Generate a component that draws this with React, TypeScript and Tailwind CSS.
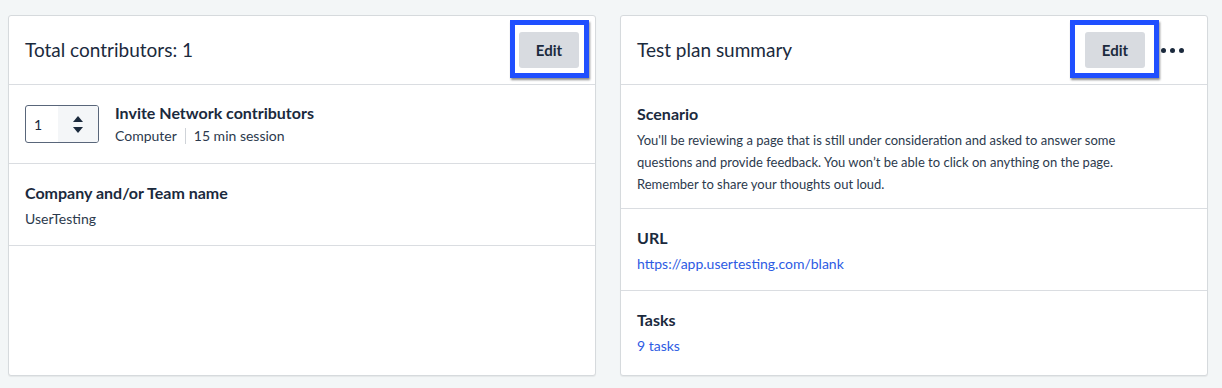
import React from 'react';

const font = { fontFamily: 'Lato, "Open Sans", sans-serif' };

function EditButton({ wide }: { wide?: boolean }) {
  return (
    <div className="relative">
      <div
        className={
          wide
            ? 'pointer-events-none absolute -top-[12px] -bottom-[10px] -left-[15px] -right-[14px] border-[5px] border-[#1f4fff] shadow-[1px_2px_2px_rgba(0,0,0,0.45)]'
            : 'pointer-events-none absolute -top-[12px] -bottom-[10px] -left-[9px] -right-[10px] border-[5px] border-[#1f4fff] shadow-[1px_2px_2px_rgba(0,0,0,0.45)]'
        }
      />
      <button className="h-9 w-[60px] rounded-[3px] bg-[#d8dbe0] text-[15px] font-bold text-[#1b2a3d]">Edit</button>
    </div>
  );
}

function Section({ title, children, className }: { title: string; children: React.ReactNode; className: string }) {
  return (
    <div className={className}>
      <div className="text-[16px] font-bold leading-[22px] text-[#1b2a3d]">{title}</div>
      <div className="mt-1 text-[14px] leading-[22px] text-[#2c3a4d]">{children}</div>
    </div>
  );
}

export default function App() {
  return (
    <div className="h-[388px] bg-[#f3f6f7] pl-2 pr-[14px] pt-[15px]" style={font}>
      <div className="grid grid-cols-2 gap-6">
        {/* contributors */}
        <div className="h-[361px] rounded-[3px] border border-[#d6dadd] bg-white shadow-[0_1px_1px_rgba(0,0,0,0.06)]">
          <div className="flex h-[69px] items-center justify-between border-b border-[#dadde1] pl-4 pr-4">
            <h2 className="text-[19px] text-[#1b2a3d]">Total contributors: 1</h2>
            <EditButton />
          </div>

          <div className="border-b border-[#dadde1] px-4 py-5">
            <div className="flex h-[38px] items-center gap-4">
              <div className="flex h-[38px] w-[74px] overflow-hidden rounded-[3px] border border-[#59667a]">
                <div className="flex flex-1 items-center pl-2 text-[14px] text-[#1b2a3d]">1</div>
                <div className="flex w-[40px] flex-col items-center justify-center gap-[5px] bg-[#f4f6f8]">
                  <span className="h-0 w-0 border-x-[5px] border-b-[6px] border-x-transparent border-b-[#1b2a3d]" />
                  <span className="h-0 w-0 border-x-[5px] border-t-[6px] border-x-transparent border-t-[#1b2a3d]" />
                </div>
              </div>
              <div>
                <div className="text-[16px] font-bold leading-[20px] text-[#1b2a3d]">Invite Network contributors</div>
                <div className="mt-[3px] flex items-center text-[14px] leading-[20px] text-[#2c3a4d]">
                  <span>Computer</span>
                  <span className="mx-2 h-4 w-px bg-[#cfd3d8]" />
                  <span>15 min session</span>
                </div>
              </div>
            </div>
          </div>

          <div className="border-b border-[#dadde1] px-4 pt-[18px] pb-[15px]">
            <div className="text-[16px] font-bold leading-[22px] text-[#1b2a3d]">Company and/or Team name</div>
            <div className="mt-1 text-[14px] leading-[22px] text-[#2c3a4d]">UserTesting</div>
          </div>
        </div>

        {/* test plan */}
        <div className="h-[361px] rounded-[3px] border border-[#d6dadd] bg-white shadow-[0_1px_1px_rgba(0,0,0,0.06)]">
          <div className="flex h-[69px] items-center justify-between border-b border-[#dadde1] pl-4 pr-[23px]">
            <h2 className="text-[19px] text-[#1b2a3d]">Test plan summary</h2>
            <div className="flex items-center gap-[16px]">
              <EditButton wide />
              <div className="flex items-center gap-[4px]">
                <span className="h-[5px] w-[5px] rounded-full bg-[#1b2a3d]" />
                <span className="h-[5px] w-[5px] rounded-full bg-[#1b2a3d]" />
                <span className="h-[5px] w-[5px] rounded-full bg-[#1b2a3d]" />
              </div>
            </div>
          </div>

          <Section title="Scenario" className="border-b border-[#dadde1] px-4 pt-[18px] pb-[13px]">
            <p className="max-w-[482px] text-[13px]">
              You'll be reviewing a page that is still under consideration and asked to answer some questions and
              provide feedback. You won’t be able to click on anything on the page. Remember to share your thoughts out
              loud.
            </p>
          </Section>
          <Section title="URL" className="border-b border-[#dadde1] px-4 pt-[18px] pb-[15px]">
            <a className="text-[#2d5be3]">https://app.usertesting.com/blank</a>
          </Section>
          <Section title="Tasks" className="px-4 pt-[18px] pb-[15px]">
            <a className="text-[#2d5be3]">9 tasks</a>
          </Section>
        </div>
      </div>
    </div>
  );
}
